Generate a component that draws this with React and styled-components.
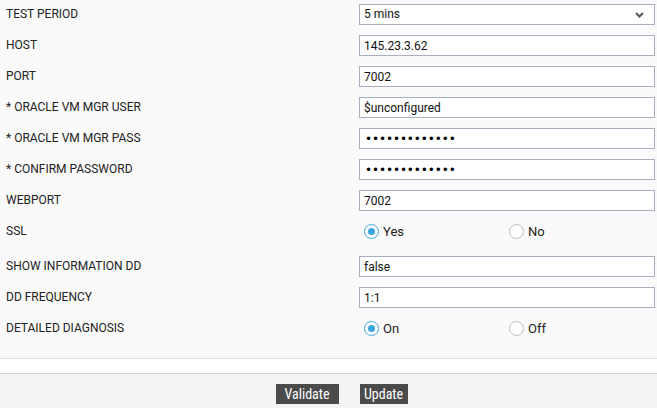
import React from "react";
import styled, { createGlobalStyle } from "styled-components";

const Global = createGlobalStyle`
  html, body { margin: 0; padding: 0; background: #f4f4f4; }
  body { font-family: Roboto, "Liberation Sans", sans-serif; }
  * { box-sizing: border-box; }
`;

const Page = styled.div`
  width: 657px;
  height: 408px;
  display: flex;
  flex-direction: column;
  overflow: hidden;
`;

const Form = styled.div`
  background: #fafafa;
  padding: 0 2px 9px 6px;
  border-bottom: 1px solid #e2e2e2;
`;

const Row = styled.div`
  display: grid;
  grid-template-columns: 353px 296px;
  align-items: center;
  padding: ${(p) => (p.$radio ? "4px 0 10px" : "4px 0 6px")};
`;

const Label = styled.div`
  font-size: 12px;
  color: #222;
  line-height: 21px;
`;

const Input = styled.input`
  width: 296px;
  height: 21px;
  border: 1px solid #a9afc0;
  background: #fff;
  padding: 0 4px;
  font-family: Roboto, "Liberation Sans", sans-serif;
  font-size: 12px;
  color: #111;
  outline: none;
  &[type="password"] {
    font-family: "DejaVu Sans", sans-serif;
    font-size: 12px;
    letter-spacing: -0.1px;
    color: #000;
    padding-left: 5px;
  }
`;

const SelectBox = styled.div`
  width: 296px;
  height: 21px;
  border: 1px solid #a9afc0;
  background: #fff;
  padding: 0 4px;
  font-size: 12px;
  color: #111;
  line-height: 19px;
  display: flex;
  align-items: center;
  justify-content: space-between;
`;

const Chevron = styled.svg`
  width: 9px;
  height: 6px;
  margin-right: 6px;
`;

const RadioGroup = styled.div`
  display: flex;
  height: 21px;
  align-items: center;
`;

const RadioOption = styled.label`
  width: 145px;
  display: flex;
  align-items: center;
  gap: 4px;
  padding-left: 5px;
  font-size: 13px;
  color: #222;
`;

const RadioCircle = styled.span`
  width: 15px;
  height: 15px;
  border-radius: 50%;
  border: 1px solid ${(p) => (p.$checked ? "#3aa7dc" : "#b5bcc8")};
  background: #fff;
  display: flex;
  align-items: center;
  justify-content: center;
  &::after {
    content: "";
    width: 7px;
    height: 7px;
    border-radius: 50%;
    background: ${(p) => (p.$checked ? "#3aa7dc" : "transparent")};
  }
`;

const Spacer = styled.div`
  height: 15px;
  background: #fff;
  border-bottom: 1px solid #d2d2d2;
`;

const Footer = styled.div`
  flex: 1;
  background: #f4f4f4;
  display: flex;
  justify-content: center;
  gap: 21px;
  padding: 10px 0 0 26px;
`;

const Button = styled.button`
  width: ${(p) => p.$w}px;
  height: 20px;
  border: none;
  background: #4b4b4b;
  color: #fff;
  font-family: "Liberation Sans Narrow", "Roboto Condensed", "DejaVu Sans Condensed", sans-serif;
  font-size: 14px;
  padding: 0;
  line-height: 20px;
`;

const Radio = ({ options, value }) => (
  <RadioGroup>
    {options.map((o) => (
      <RadioOption key={o}>
        <RadioCircle $checked={o === value} />
        {o}
      </RadioOption>
    ))}
  </RadioGroup>
);

export default function App() {
  return (
    <Page>
      <Global />
      <Form>
        <Row>
          <Label>TEST PERIOD</Label>
          <SelectBox>
            <span>5 mins</span>
            <Chevron viewBox="0 0 9 6">
              <path d="M1 1 L4.5 4.5 L8 1" fill="none" stroke="#555" strokeWidth="2" />
            </Chevron>
          </SelectBox>
        </Row>
        <Row>
          <Label>HOST</Label>
          <Input defaultValue="145.23.3.62" readOnly />
        </Row>
        <Row>
          <Label>PORT</Label>
          <Input defaultValue="7002" readOnly />
        </Row>
        <Row>
          <Label>* ORACLE VM MGR USER</Label>
          <Input defaultValue="$unconfigured" readOnly />
        </Row>
        <Row>
          <Label>* ORACLE VM MGR PASS</Label>
          <Input type="password" defaultValue="abcdefghijklm" readOnly />
        </Row>
        <Row>
          <Label>* CONFIRM PASSWORD</Label>
          <Input type="password" defaultValue="abcdefghijklm" readOnly />
        </Row>
        <Row>
          <Label>WEBPORT</Label>
          <Input defaultValue="7002" readOnly />
        </Row>
        <Row $radio>
          <Label>SSL</Label>
          <Radio options={["Yes", "No"]} value="Yes" />
        </Row>
        <Row>
          <Label>SHOW INFORMATION DD</Label>
          <Input defaultValue="false" readOnly />
        </Row>
        <Row>
          <Label>DD FREQUENCY</Label>
          <Input defaultValue="1:1" readOnly />
        </Row>
        <Row $radio>
          <Label>DETAILED DIAGNOSIS</Label>
          <Radio options={["On", "Off"]} value="On" />
        </Row>
      </Form>
      <Spacer />
      <Footer>
        <Button $w={63}>Validate</Button>
        <Button $w={48}>Update</Button>
      </Footer>
    </Page>
  );
}
